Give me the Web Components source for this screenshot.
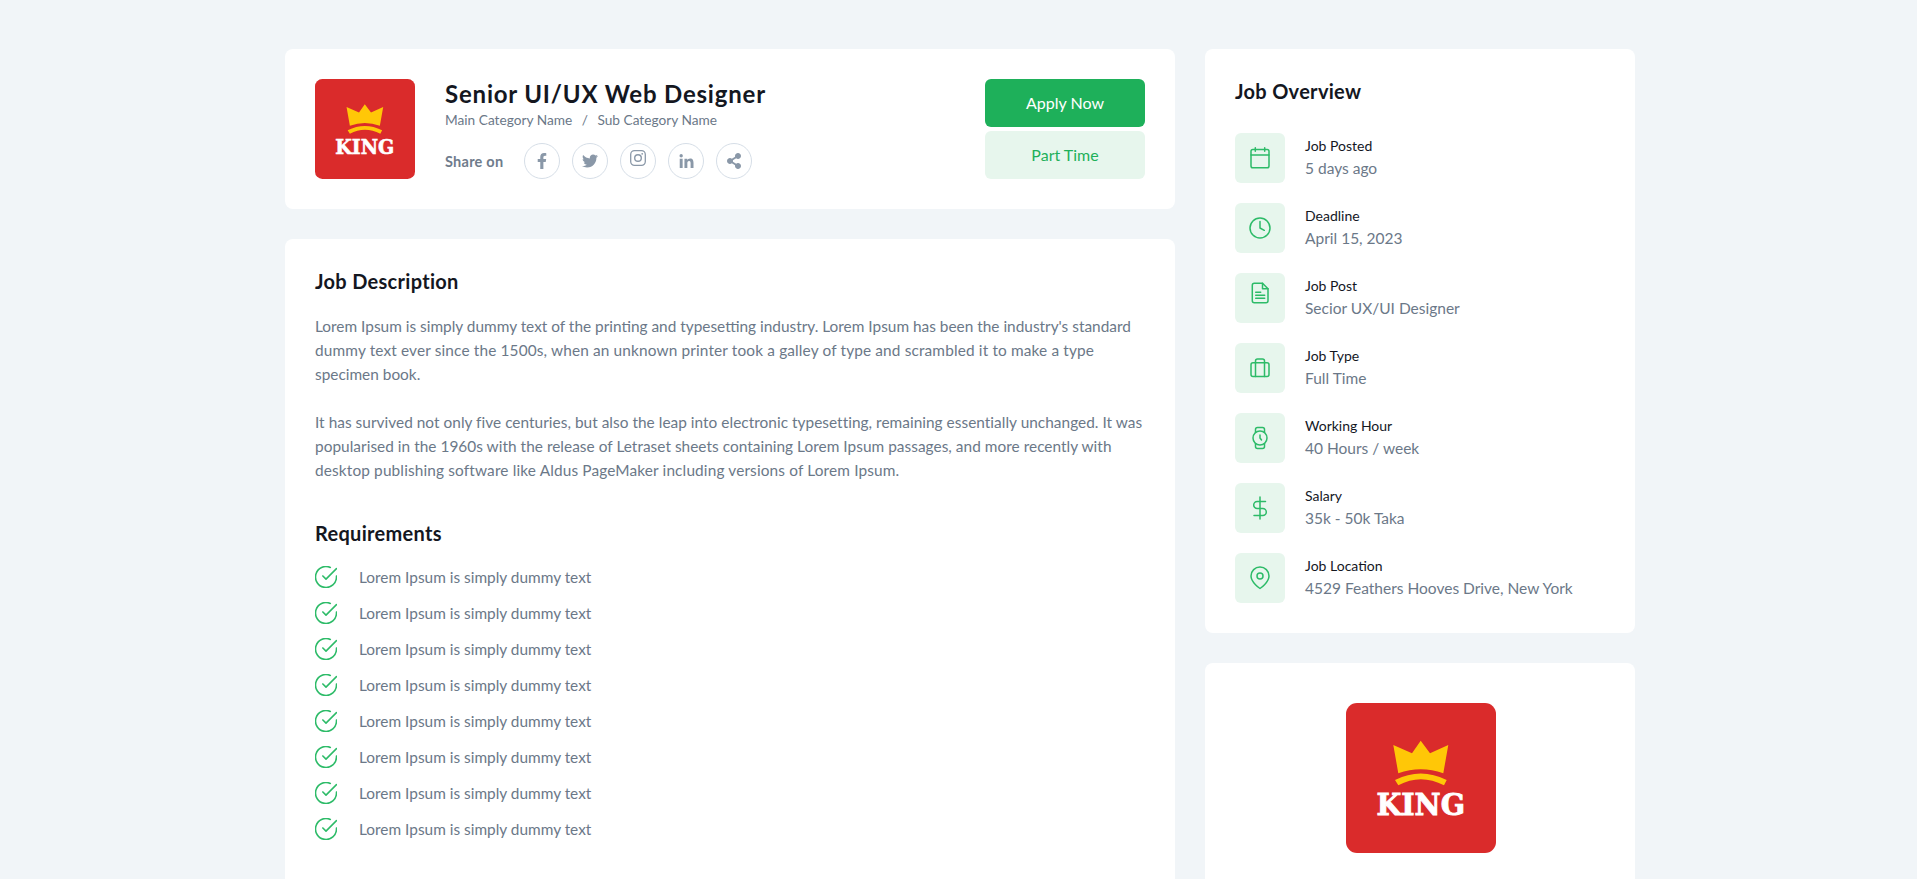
<!DOCTYPE html>
<html>
<head>
<meta charset="utf-8">
<title>Job Details</title>
<style>
    html, body { margin: 0; height: 879px; overflow: hidden; background: #f1f5f8; }
    body { font-family: "Lato", "Noto Sans", sans-serif; color: #6b7888; }
</style>
</head>
<body>
<job-page>
    <job-header slot="header"></job-header>
    <job-details slot="details"></job-details>
    <job-overview slot="overview">
        <overview-item icon="calendar" label="Job Posted" value="5 days ago"></overview-item>
        <overview-item icon="clock" label="Deadline" value="April 15, 2023"></overview-item>
        <overview-item icon="file" label="Job Post" value="Secior UX/UI Designer"></overview-item>
        <overview-item icon="briefcase" label="Job Type" value="Full Time"></overview-item>
        <overview-item icon="watch" label="Working Hour" value="40 Hours / week"></overview-item>
        <overview-item icon="dollar" label="Salary" value="35k - 50k Taka"></overview-item>
        <overview-item icon="pin" label="Job Location" value="4529 Feathers Hooves Drive, New York"></overview-item>
    </job-overview>
    <company-card slot="company"></company-card>
</job-page>

<script>
const SOCIAL_ICONS = {
    facebook: `<svg viewBox="0 0 320 512" width="10" height="16"><path fill="currentColor" d="M279.14 288l14.22-92.66h-88.91v-60.13c0-25.35 12.42-50.06 52.24-50.06h40.42V6.26S260.43 0 225.36 0c-73.22 0-121.08 44.38-121.08 124.72v70.62H22.89V288h81.39v224h100.17V288z"/></svg>`,
    twitter: `<svg viewBox="0 0 512 512" width="16" height="16"><path fill="currentColor" d="M459.37 151.716c.325 4.548.325 9.097.325 13.645 0 138.72-105.583 298.558-298.558 298.558-59.452 0-114.68-17.219-161.137-47.106 8.447.974 16.568 1.299 25.34 1.299 49.055 0 94.213-16.568 130.274-44.832-46.132-.975-84.792-31.188-98.112-72.772 6.498.974 12.995 1.624 19.818 1.624 9.421 0 18.843-1.3 27.614-3.573-48.081-9.747-84.143-51.98-84.143-102.985v-1.299c13.969 7.797 30.214 12.67 47.431 13.319-28.264-18.843-46.781-51.005-46.781-87.391 0-19.492 5.197-37.36 14.294-52.954 51.655 63.675 129.3 105.258 216.365 109.807-1.624-7.797-2.599-15.918-2.599-24.04 0-57.828 46.782-104.934 104.934-104.934 30.213 0 57.502 12.67 76.67 33.137 23.715-4.548 46.456-13.32 66.599-25.34-7.798 24.366-24.366 44.833-46.132 57.827 21.117-2.273 41.584-8.122 60.426-16.243-14.292 20.791-32.161 39.308-52.628 54.253z"/></svg>`,
    instagram: `<svg viewBox="0 0 16 16" width="16" height="16" style="margin-top:-7px"><rect x=".7" y=".7" width="14.600" height="14.600" rx="3.800" fill="none" stroke="currentColor" stroke-width="1.300"/><circle cx="8" cy="8" r="3.300" fill="none" stroke="currentColor" stroke-width="1.400"/><circle cx="12.200" cy="3.800" r=".9" fill="currentColor"/></svg>`,
    linkedin: `<svg viewBox="0 0 448 512" width="15" height="16"><path fill="currentColor" transform="translate(0 32)" d="M100.28 448H7.4V148.9h92.88zM53.79 108.1C24.09 108.1 0 83.5 0 53.8a53.79 53.79 0 0 1 107.58 0c0 29.7-24.1 54.3-53.79 54.3zM447.9 448h-92.68V302.4c0-34.7-.7-79.2-48.29-79.2-48.29 0-55.69 37.7-55.69 76.7V448h-92.78V148.9h89.08v40.8h1.3c12.4-23.5 42.69-48.3 87.88-48.3 94 0 111.28 61.9 111.28 142.3V448z"/></svg>`,
    share: `<svg viewBox="0 0 448 512" width="14" height="16"><path fill="currentColor" d="M352 320c-22.608 0-43.387 7.819-59.79 20.895l-102.486-64.054a96.551 96.551 0 0 0 0-41.683l102.486-64.054C308.613 184.181 329.392 192 352 192c53.019 0 96-42.981 96-96S405.019 0 352 0s-96 42.981-96 96c0 7.158.79 14.13 2.276 20.841L155.79 180.895C139.387 167.819 118.608 160 96 160c-53.019 0-96 42.981-96 96s42.981 96 96 96c22.608 0 43.387-7.819 59.79-20.895l102.486 64.054A96.301 96.301 0 0 0 256 416c0 53.019 42.981 96 96 96s96-42.981 96-96-42.981-96-96-96z"/></svg>`
}

const OVERVIEW_ICONS = {
    calendar: `<rect x="3" y="3.500" width="18" height="18.300" rx="1.800"/><path d="M3 9h18M7.300 1.800v3.500M16.700 1.800v3.500"/>`,
    clock: `<circle cx="12" cy="12" r="10"/><path d="M12 5.500V12l4.300 2.300"/>`,
    file: `<path d="M6.300 2.200h8.200l5.500 5.500v12.100a2 2 0 0 1-2 2H6.300a2 2 0 0 1-2-2V4.200a2 2 0 0 1 2-2z"/><path d="M14.500 2.200v5.500H20M7.700 11.300h5M7.700 14.300h9M7.700 17.300h9"/>`,
    briefcase: `<rect x="3" y="6.800" width="18" height="13.800" rx="2"/><path d="M7.500 20.600V5a2 2 0 0 1 2-2h5a2 2 0 0 1 2 2v15.600"/>`,
    watch: `<circle cx="12" cy="12" r="7"/><path d="M12 9v3l1.500 2M7.500 6.500V3.500a2 2 0 0 1 2-2h5a2 2 0 0 1 2 2v3M7.500 17.500v3a2 2 0 0 0 2 2h5a2 2 0 0 0 2-2v-3"/>`,
    dollar: `<path d="M12 1v22M17.500 5.500H9.200a3.500 3.500 0 0 0 0 7h5.600a3.500 3.500 0 0 1 0 7H6"/>`,
    pin: `<path d="M21 10c0 6.500-9 12.500-9 12.500S3 16.500 3 10a9 9 0 0 1 18 0z"/><circle cx="12" cy="10" r="3"/>`
}

class KingLogo extends HTMLElement {
    constructor() {
        super()
        this.attachShadow({mode: 'open'})
        this.shadowRoot.innerHTML = `
            <style>
                :host { display: block; width: var(--logo-size, 100px); height: var(--logo-size, 100px); flex: none; }
                svg { display: block; width: 100%; height: 100%; }
                text { font-family: "DejaVu Serif", serif; font-weight: 700; font-size: 30px; fill: #fff; stroke: #fff; stroke-width: .9px; }
            </style>
            <svg viewBox="0 0 150 150">
                <rect width="150" height="150" rx="11" fill="#da2b2b"/>
                <path fill="#ffc707" d="M47.300 42L66 50.300 74.700 37.700 84 50.300 102.300 42 97.300 70.300Q74.700 62 52.300 70.300z"/>
                <path fill="#ffc707" d="M49 77Q74.700 64 100.700 77L98 82.300Q74.700 70 52.300 82.300z"/>
                <text x="30.500" y="112" textLength="88.500" lengthAdjust="spacingAndGlyphs">KING</text>
            </svg>
        `
    }
}

class SocialLink extends HTMLElement {
    constructor() {
        super()
        this.attachShadow({mode: 'open'})
        this.shadowRoot.innerHTML = `
            <style>
                :host {
                    display: flex; align-items: center; justify-content: center;
                    width: 36px; height: 36px; box-sizing: border-box;
                    border: 1px solid #d6dee7; border-radius: 50%; color: #8a98a8;
                }
                svg { display: block; }
            </style>
            ${SOCIAL_ICONS[this.getAttribute('icon')]}
        `
    }
}

class JobHeader extends HTMLElement {
    constructor() {
        super()
        this.attachShadow({mode: 'open'})
        this.shadowRoot.innerHTML = `
            <style>
                :host {
                    display: flex; align-items: flex-start; box-sizing: border-box; height: 160px;
                    padding: 30px; background: #fff; border-radius: 8px;
                }
                .info { flex: 1; margin-left: 30px; }
                h1 { margin: 0; font-size: 24px; line-height: 30px; font-weight: 700; color: #14171f; letter-spacing: .8px; }
                .cats { margin-top: 1px; font-size: 13.700px; line-height: 20px; color: #6b7888; }
                .cats span { margin: 0 6px; }
                .share { display: flex; align-items: center; margin-top: 13px; }
                .share b { font-size: 14.500px; letter-spacing: .25px; font-weight: 700; color: #6f7c8c; width: 79px; }
                .icons { display: flex; gap: 12px; }
                .actions { display: flex; flex-direction: column; gap: 4px; width: 160px; }
                .btn {
                    display: flex; align-items: center; justify-content: center; box-sizing: border-box; height: 48px;
                    padding-bottom: 1px; border-radius: 6px; font-size: 16px;
                }
                .apply { background: #1eb05a; color: #fff; }
                .type { background: #e7f6ed; color: #1eb05a; }
            </style>
            <king-logo></king-logo>
            <div class="info">
                <h1>Senior UI/UX Web Designer</h1>
                <div class="cats">Main Category Name <span>/</span> Sub Category Name</div>
                <div class="share">
                    <b>Share on</b>
                    <div class="icons">
                        <social-link icon="facebook"></social-link>
                        <social-link icon="twitter"></social-link>
                        <social-link icon="instagram"></social-link>
                        <social-link icon="linkedin"></social-link>
                        <social-link icon="share"></social-link>
                    </div>
                </div>
            </div>
            <div class="actions">
                <div class="btn apply">Apply Now</div>
                <div class="btn type">Part Time</div>
            </div>
        `
    }
}

class CheckItem extends HTMLElement {
    constructor() {
        super()
        this.attachShadow({mode: 'open'})
        this.shadowRoot.innerHTML = `
            <style>
                :host { display: flex; align-items: center; gap: 22px; height: 36px; font-size: 15.400px; color: #6b7888; }
                svg { width: 22px; height: 22px; flex: none; fill: none; stroke: #2dbb68; stroke-width: 1.500; stroke-linecap: round; stroke-linejoin: round; }
            </style>
            <svg viewBox="1.500 1.500 21 21"><path d="M22 11v1a10 10 0 1 1-5.900-9.100"/><path d="M22 4L12 14l-3-3"/></svg>
            <span><slot></slot></span>
        `
    }
}

class JobDetails extends HTMLElement {
    constructor() {
        super()
        this.attachShadow({mode: 'open'})
        const items = Array(8).fill('<check-item>Lorem Ipsum is simply dummy text</check-item>').join('')
        this.shadowRoot.innerHTML = `
            <style>
                :host {
                    display: block; box-sizing: border-box; padding: 29px 30px 60px;
                    background: #fff; border-radius: 8px;
                }
                h2 { margin: 0; font-size: 20px; line-height: 26px; font-weight: 700; color: #14171f; letter-spacing: .3px; }
                p { margin: 20px 0 24px; font-size: 15.400px; line-height: 24px; color: #6b7888; white-space: nowrap; }
                p + p { margin-top: 0; }
                h2.req { margin: 38px 0 13px; }
                .wide { letter-spacing: .14px; }
                .wider { letter-spacing: .03px; }
            </style>
            <h2>Job Description</h2>
            <p>Lorem Ipsum is simply dummy text of the printing and typesetting industry. Lorem Ipsum has been the industry's standard<br><span class="wide">dummy text ever since the 1500s, when an unknown printer took a galley of type and scrambled it to make a type</span><br>specimen book.</p>
            <p><span class="wider">It has survived not only five centuries, but also the leap into electronic typesetting, remaining essentially unchanged. It was</span><br><span class="wider">popularised in the 1960s with the release of Letraset sheets containing Lorem Ipsum passages, and more recently with</span><br><span class="wide">desktop publishing software like Aldus PageMaker including versions of Lorem Ipsum.</span></p>
            <h2 class="req">Requirements</h2>
            ${items}
        `
    }
}

class OverviewItem extends HTMLElement {
    constructor() {
        super()
        this.attachShadow({mode: 'open'})
        const icon = this.getAttribute('icon')
        this.shadowRoot.innerHTML = `
            <style>
                :host { display: flex; align-items: center; gap: 20px; height: 50px; }
                .tile {
                    display: flex; align-items: center; justify-content: center;
                    width: 50px; height: 50px; flex: none; background: #e7f6ed; border-radius: 6px;
                }
                svg { width: 24px; height: 24px; fill: none; stroke: #2dbb68; stroke-width: 1.500; stroke-linecap: round; stroke-linejoin: round; }
                svg.file { margin-top: -11px; }
                .text { padding-bottom: 2px; }
                .label { font-size: 14px; line-height: 20px; color: #14171f; }
                .value { margin-top: 1px; font-size: 15.500px; line-height: 22px; color: #6b7888; }
            </style>
            <div class="tile"><svg class="${icon}" viewBox="0 0 24 24">${OVERVIEW_ICONS[icon]}</svg></div>
            <div class="text">
                <div class="label">${this.getAttribute('label')}</div>
                <div class="value">${this.getAttribute('value')}</div>
            </div>
        `
    }
}

class JobOverview extends HTMLElement {
    constructor() {
        super()
        this.attachShadow({mode: 'open'})
        this.shadowRoot.innerHTML = `
            <style>
                :host { display: block; box-sizing: border-box; padding: 28px 30px 30px; background: #fff; border-radius: 8px; }
                h2 { margin: 0 0 28px; font-size: 20px; line-height: 28px; font-weight: 700; color: #14171f; letter-spacing: .3px; }
                .list { display: flex; flex-direction: column; gap: 20px; }
            </style>
            <h2>Job Overview</h2>
            <div class="list"><slot></slot></div>
        `
    }
}

class CompanyCard extends HTMLElement {
    constructor() {
        super()
        this.attachShadow({mode: 'open'})
        this.shadowRoot.innerHTML = `
            <style>
                :host {
                    display: flex; justify-content: center; padding: 40px 30px 40px 32px;
                    background: #fff; border-radius: 8px; --logo-size: 150px;
                }
            </style>
            <king-logo></king-logo>
        `
    }
}

class JobPage extends HTMLElement {
    constructor() {
        super()
        this.attachShadow({mode: 'open'})
        this.shadowRoot.innerHTML = `
            <style>
                :host {
                    display: grid; grid-template-columns: 890px 430px; gap: 30px;
                    width: 1350px; margin: 49px 0 0 285px; align-items: start;
                }
                .col { display: flex; flex-direction: column; gap: 30px; }
            </style>
            <div class="col"><slot name="header"></slot><slot name="details"></slot></div>
            <div class="col"><slot name="overview"></slot><slot name="company"></slot></div>
        `
    }
}

customElements.define('king-logo', KingLogo)
customElements.define('social-link', SocialLink)
customElements.define('job-header', JobHeader)
customElements.define('check-item', CheckItem)
customElements.define('job-details', JobDetails)
customElements.define('overview-item', OverviewItem)
customElements.define('job-overview', JobOverview)
customElements.define('company-card', CompanyCard)
customElements.define('job-page', JobPage)
</script>
</body>
</html>
